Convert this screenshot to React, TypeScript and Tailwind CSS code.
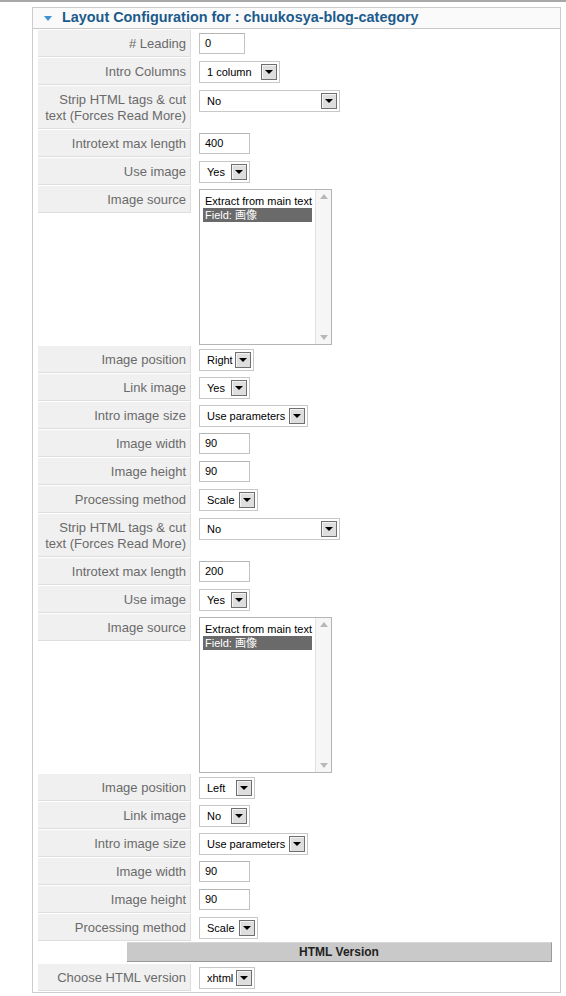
import React from 'react';

type Row =
  | { kind: 'input'; label: string; value: string; w: string }
  | { kind: 'select'; label: string; value: string; w: string }
  | { kind: 'list'; label: string }
  | { kind: 'strip'; value: string };

const font = { fontFamily: '"Liberation Sans", Arial, "Noto Sans CJK JP", sans-serif' };

const block = (pos: string, link: string, len: string): Row[] => [
  { kind: 'strip', value: 'No' },
  { kind: 'input', label: 'Introtext max length', value: len, w: 'w-[51px]' },
  { kind: 'select', label: 'Use image', value: 'Yes', w: 'w-[51px]' },
  { kind: 'list', label: 'Image source' },
  { kind: 'select', label: 'Image position', value: pos, w: pos === 'Left' ? 'w-[56px]' : 'w-[55px]' },
  { kind: 'select', label: 'Link image', value: link, w: 'w-[51px]' },
  { kind: 'select', label: 'Intro image size', value: 'Use parameters', w: 'w-[109px]' },
  { kind: 'input', label: 'Image width', value: '90', w: 'w-[51px]' },
  { kind: 'input', label: 'Image height', value: '90', w: 'w-[51px]' },
  { kind: 'select', label: 'Processing method', value: 'Scale', w: 'w-[59px]' },
];

const rows: Row[] = [
  { kind: 'input', label: '# Leading', value: '0', w: 'w-[46px]' },
  { kind: 'select', label: 'Intro Columns', value: '1 column', w: 'w-[81px]' },
  ...block('Right', 'Yes', '400'),
  ...block('Left', 'No', '200'),
];

function DropButton() {
  return (
    <span className="flex h-[16px] w-[16px] items-center justify-center border border-[#6f6f6f] bg-[#dedede] shadow-[inset_1px_1px_0_#f4f4f4]">
      <span className="h-0 w-0 border-x-[4px] border-t-[4px] border-x-transparent border-t-black" />
    </span>
  );
}

function Select({ value, w }: { value: string; w: string }) {
  return (
    <div className={`flex h-[22px] ${w} items-center justify-between border border-[#c8c8c8] bg-white pl-[7px] pr-[2px] text-[11px] text-black`}>
      <span>{value}</span>
      <DropButton />
    </div>
  );
}

function TextInput({ value, w }: { value: string; w: string }) {
  return (
    <div className={`flex h-[21px] ${w} items-center border border-[#c2c2c2] border-t-[#b5b5b5] bg-white pl-[5px] text-[11px] text-black`}>
      {value}
    </div>
  );
}

function ListBox() {
  return (
    <div className="flex h-[156px] w-[133px] border border-[#b4b4b4] bg-white text-[11px]">
      <div className="flex-1 px-[3px] pt-[4px]">
        <div className="h-[14px] pl-[2px] leading-[14px] text-black">Extract from main text</div>
        <div className="h-[14px] bg-[#6a6a6a] pl-[2px] leading-[14px] text-white">Field: 画像</div>
      </div>
      <div className="flex w-[16px] flex-col items-center justify-between border-l border-[#e2e2e2] bg-[#f6f6f6] py-[4px]">
        <span className="h-0 w-0 border-x-[4px] border-b-[5px] border-x-transparent border-b-[#b8b8b8]" />
        <span className="h-0 w-0 border-x-[4px] border-t-[5px] border-x-transparent border-t-[#b8b8b8]" />
      </div>
    </div>
  );
}

function LabelCell({ children, tall }: { children: React.ReactNode; tall?: boolean }) {
  return (
    <div
      className={`flex w-[153px] shrink-0 items-center justify-end border-r border-b border-[#dedede] bg-[#f0f0f0] pr-[4px] text-right text-[13px] text-[#6a6a6a] ${
        tall ? 'h-[43px] pt-[2px] leading-[16px]' : 'h-[27px] leading-[15px]'
      }`}
    >
      {children}
    </div>
  );
}

function ParamRow({ row }: { row: Row }) {
  if (row.kind === 'strip') {
    return (
      <div className="mb-px flex">
        <LabelCell tall>
          Strip HTML tags &amp; cut
          <br />
          text (Forces Read More)
        </LabelCell>
        <div className="ml-px pl-[7px] pt-[4px]">
          <Select value={row.value} w="w-[141px]" />
        </div>
      </div>
    );
  }
  if (row.kind === 'list') {
    return (
      <div className="mb-px flex h-[159px] items-start">
        <LabelCell>{row.label}</LabelCell>
        <div className="ml-px pl-[7px] pt-[3px]">
          <ListBox />
        </div>
      </div>
    );
  }
  return (
    <div className="mb-px flex items-start">
      <LabelCell>{row.label}</LabelCell>
      <div className="ml-px pl-[7px] pt-[3px]">
        {row.kind === 'input' ? <TextInput value={row.value} w={row.w} /> : <Select value={row.value} w={row.w} />}
      </div>
    </div>
  );
}

export default function App() {
  return (
    <div className="min-h-[996px] border-t-2 border-[#a8a8a8] bg-white pt-[5px]" style={font}>
      <div className="ml-[32px] w-[529px] border border-[#cccccc]">
        {/* Panel header */}
        <div className="flex h-[21px] items-center border-b border-[#c8c8c8] bg-[#fafafa] pl-[11px]">
          <span className="mr-[10px] h-0 w-0 border-x-[4px] border-t-[5px] border-x-transparent border-t-[#3b94d2]" />
          <span className="text-[14.4px] font-bold text-[#1b5a8c]">Layout Configuration for : chuukosya-blog-category</span>
        </div>

        <div className="px-[5px] pt-px">
          {rows.map((row, i) => (
            <ParamRow key={i} row={row} />
          ))}

          {/* HTML Version heading */}
          <div className="mb-[2px] ml-[89px] mt-px flex h-[20px] w-[425px] items-center justify-center border-t border-r border-b border-t-[#d6d6d6] border-r-[#9a9a9a] border-b-[#9a9a9a] bg-[#c9c9c9] text-[12px] font-bold text-[#222222]">
            HTML Version
          </div>

          <ParamRow row={{ kind: 'select', label: 'Choose HTML version', value: 'xhtml', w: 'w-[56px]' }} />
        </div>
      </div>
    </div>
  );
}
